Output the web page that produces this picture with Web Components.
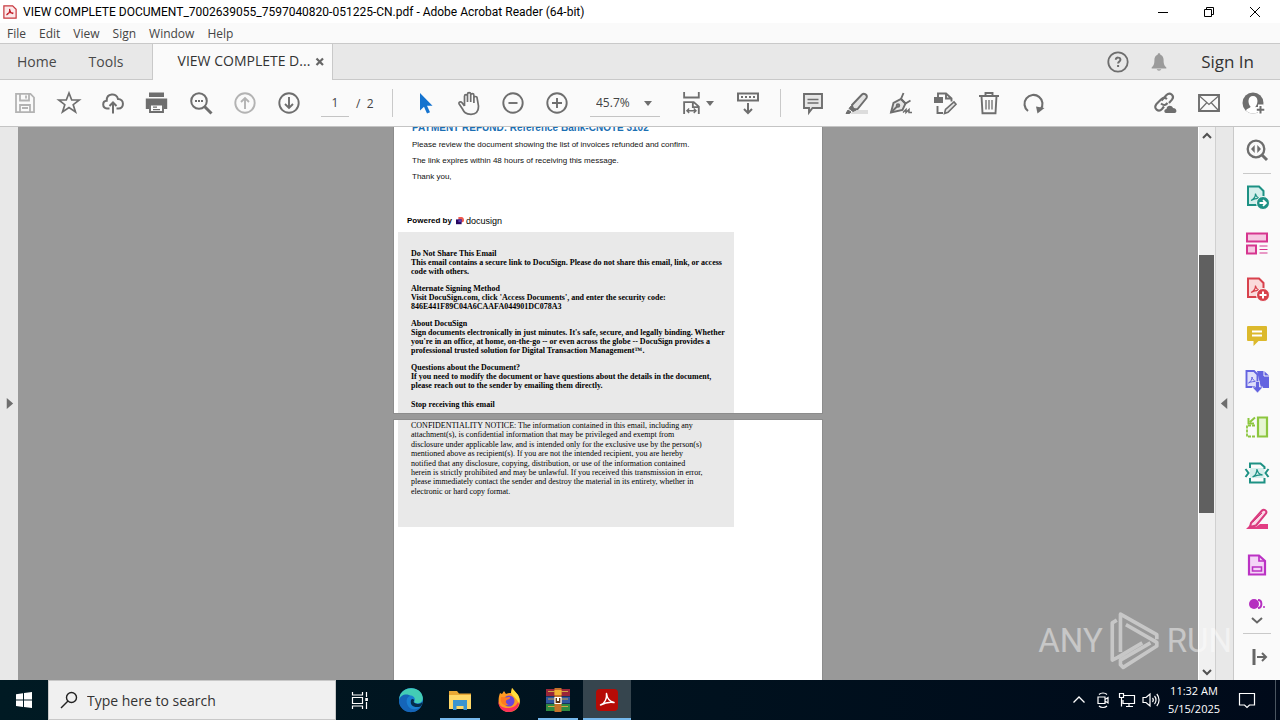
<!DOCTYPE html>
<html lang="en">
<head>
<meta charset="utf-8">
<title>VIEW COMPLETE DOCUMENT - Adobe Acrobat Reader</title>
<style>
  html, body { margin: 0; height: 100%; }
  body { font-family: "Open Sans", "Noto Sans", sans-serif; font-size: 12px; color: #222; overflow: hidden; }
</style>
</head>
<body>
<acro-desktop></acro-desktop>
<script>
const ICONS = {
  pdfapp: `<svg viewBox="0 0 16 16"><path d="M1 1h10l4 4v10H1z" fill="#fbe9ea" stroke="#c8383f" stroke-width="1.4"/><path d="M4 11.500c2-1 4-4 3.500-7M4 11.500c1-3 5-3.500 8-2M7.500 5c.5 3 2 4.500 4 5" fill="none" stroke="#c21f2a" stroke-width="1.300"/></svg>`,
  min: `<svg viewBox="0 0 12 12"><path d="M1 6.500h10" stroke="#000"/></svg>`,
  restore: `<svg viewBox="0 0 12 12"><path d="M1.500 3.500h7v7h-7zM3.500 3.500v-2h7v7h-2" fill="none" stroke="#000"/></svg>`,
  close: `<svg viewBox="0 0 12 12"><path d="M1 1l10 10M11 1L1 11" stroke="#000"/></svg>`,
  tabx: `<svg viewBox="0 0 10 10"><path d="M1.500 1.500l6.500 6.500M8 1.500L1.500 8" stroke="#666" stroke-width="2.200"/></svg>`,
  help: `<svg viewBox="0 0 24 24" fill="none" stroke="#6e6e6e" stroke-width="1.800"><circle cx="12" cy="12" r="9.700"/><path d="M9.800 9.800c0-3 4.600-2.800 4.600 0 0 1.600-2.300 1.800-2.300 3.700M12.100 15v2" stroke-width="2"/></svg>`,
  bell: `<svg viewBox="0 0 24 24" fill="#9b9b9b"><path d="M12 2.500c-1 0-1.500.7-1.500 1.500C8 4.700 7 7 7 9.500c0 5-1 6.500-3 8.500v1h16v-1c-2-2-3-3.500-3-8.500C17 7 16 4.700 13.500 4c0-.8-.5-1.500-1.500-1.500zM9.500 20h5c-.4 2-4.600 2-5 0z"/></svg>`,
  save: `<svg viewBox="0 0 24 24" fill="none" stroke="#b3b3b3" stroke-width="1.800"><path d="M3 2.800h14.500L21 6.500v14.700H3zM7 3v6.500h9V3M13 4.500v3M7 21v-7h10v7M9 17h6"/></svg>`,
  star: `<svg viewBox="0 0 24 24" fill="none" stroke="#6e6e6e" stroke-width="1.700"><path d="M12 2l2.700 7h7.500l-6 4.700 2.300 7.300-6.500-4.400L5.500 21l2.300-7.300-6-4.700h7.500z"/></svg>`,
  cloud: `<svg viewBox="0 0 24 24" fill="none" stroke="#6e6e6e" stroke-width="2"><path d="M8.500 17.500H6c-5-.3-5-7.500-.3-7.800C5.500 2 15.500 1.500 17 8c6.500 0 6.500 9.500.5 9.500h-2M12 22.500V12M8.500 15L12 11.500l3.500 3.500"/></svg>`,
  print: `<svg viewBox="0 0 24 24"><path d="M4 1.500h15V6H4z" fill="#6e6e6e"/><path d="M.8 7.500h21.400V18H19v-4H4v4H.8z" fill="#6e6e6e"/><path d="M5 13.500h13V21H5z" fill="#fff" stroke="#6e6e6e" stroke-width="1.900"/><path d="M8 16.200h4M8 18.600h7" stroke="#6e6e6e" stroke-width="1.200"/></svg>`,
  findtext: `<svg viewBox="0 0 24 24" fill="none" stroke="#6e6e6e"><circle cx="10" cy="10" r="7.800" stroke-width="2"/><path d="M15.500 15.500l7 7" stroke-width="3"/><path d="M6 10h2M9 10h2M12 10h2" stroke-width="2"/></svg>`,
  up: `<svg viewBox="0 0 24 24" fill="none" stroke="#b3b3b3" stroke-width="1.900"><circle cx="12" cy="12" r="9.700"/><path d="M12 18V7M8 11l4-4 4 4"/></svg>`,
  down: `<svg viewBox="0 0 24 24" fill="none" stroke="#6e6e6e" stroke-width="1.900"><circle cx="12" cy="12" r="9.700"/><path d="M12 6v11M8 13l4 4 4-4"/></svg>`,
  pointer: `<svg viewBox="0 0 24 24"><path d="M7 2v17.500l4-3.700 3 6.700 3-1.300-3-6.500h5.500z" fill="#1473cf"/></svg>`,
  hand: `<svg viewBox="0 0 24 24" fill="none" stroke="#6e6e6e" stroke-width="1.700"><path d="M7.500 15V5.200c0-2 3-2 3 0V11 3.200c0-2 3.200-2 3.200 0V11 4.200c0-2 3.200-2 3.200 0V12 7c0-2 3.200-2 3.200 0l1.400 8c0 5-2.500 8.300-7.500 8.300-5.500 0-7-2.300-8.500-5.300L2.200 13c-1-2 1.500-2.800 2.700-1.400L7.500 15"/></svg>`,
  minus: `<svg viewBox="0 0 24 24" fill="none" stroke="#6e6e6e" stroke-width="1.900"><circle cx="12" cy="12" r="9.700"/><path d="M7.500 12h9"/></svg>`,
  plus: `<svg viewBox="0 0 24 24" fill="none" stroke="#6e6e6e" stroke-width="1.900"><circle cx="12" cy="12" r="9.700"/><path d="M7 12h10M12 7v10"/></svg>`,
  caret: `<svg viewBox="0 0 8 8"><path d="M0 2h8L4 7z" fill="#6e6e6e"/></svg>`,
  fit: `<svg viewBox="0 0 24 24" fill="none" stroke="#6e6e6e" stroke-width="2"><path d="M4.500 0v6h16V0M4.500 24V11H15l5.500 5V24M14 11v5.500h6"/><path d="M7.500 20.500h10M10 18l-2.500 2.500L10 23M15 18l2.500 2.500L15 23" stroke-width="1.500"/></svg>`,
  keyb: `<svg viewBox="0 0 24 24" fill="none" stroke="#6e6e6e" stroke-width="2"><path d="M2 2.500h20v7H2z"/><path d="M5 6h14" stroke-dasharray="2 2"/><path d="M12 12v10M8 18l4 4 4-4"/></svg>`,
  comment: `<svg viewBox="0 0 24 24"><path d="M3 3h18v14H11.500L8 21.500V17H3z" fill="#e6e6e6" stroke="#6e6e6e" stroke-width="1.900"/><path d="M6.500 8.500h11M6.500 12h11" stroke="#6e6e6e" stroke-width="1.400"/></svg>`,
  marker: `<svg viewBox="0 0 24 24"><path d="M9 19h14v4H5z" fill="#dcdcdc"/><path d="M7 14L17 3.500c2-2 6 .5 4.500 3.500L12.500 18l-4.500.5z" fill="#e2e2e2" stroke="#6e6e6e" stroke-width="1.900"/><path d="M6 15l5 4-3 1.500L4 17.500zM3 19l3 2-1.500 1.500H1z" fill="#6e6e6e" stroke="#6e6e6e"/></svg>`,
  sign: `<svg viewBox="0 0 24 24" fill="none" stroke="#6e6e6e" stroke-width="1.900"><path d="M2 21.500L4.500 12 12 8l4.500 4.500L13.500 19z" fill="#e6e6e6"/><path d="M14.500 2L12 8l4.500 4.500 5-3M2 21.500l6.500-6.500"/><circle cx="9" cy="14.500" r="1.300"/><path d="M14 21.500l3-3v3l3-3v3h3" stroke-width="1.500"/></svg>`,
  editpdf: `<svg viewBox="0 0 24 24" fill="none" stroke="#6e6e6e" stroke-width="1.900"><path d="M5 6V2.500h8l5.500 5v3M13 2.500v5h5.500M4.500 15v7H10"/><path d="M1 6h9v6H1z" fill="#6e6e6e" stroke="none"/><path d="M11.500 22.500l1-4L21 11l2 2.300-8 8z" fill="#e6e6e6" stroke-width="1.600"/></svg>`,
  trash: `<svg viewBox="0 0 24 24" fill="none" stroke="#6e6e6e" stroke-width="1.900"><path d="M2 5h20M8.500 4.500V2h7v2.500M4.500 5l1 17.300h13L19.500 5"/><path d="M9 9v9.500M12 9v9.500M15 9v9.500" stroke-width="1.300"/></svg>`,
  rotate: `<svg viewBox="0 0 24 24" fill="none" stroke="#6e6e6e" stroke-width="2.100"><path d="M7 20A9 9 0 1 1 19.500 18.500"/><path d="M15 15.500l8.500 1.500-7 5.500z" fill="#6e6e6e" stroke="none"/></svg>`,
  link: `<svg viewBox="0 0 24 24"><g fill="none" stroke="#6e6e6e" stroke-width="2.100"><path d="M8.500 9.500l5-5.500c3.500-3.500 8.500.8 5.500 4.700l-3 3.300M8 12.500c3 2.500 5 1.500 6.500-.5"/><path d="M14 8c-2-1.500-4-1.500-6 .5L3.500 13c-3.500 4.500 2 8.700 5.500 5l2-2.500"/></g><path d="M13 22c-2.500-.5-2-4 .5-4 0-4 5.500-4.500 6.500-1 4 0 4.500 5 1.500 5z" fill="#6e6e6e"/></svg>`,
  mail: `<svg viewBox="0 0 24 24" fill="none" stroke="#6e6e6e"><path d="M2 4h20v16H2z" stroke-width="1.900"/><path d="M2.500 5l9.500 8.500L21.500 5M2.500 19.500L9.500 12M21.500 19.500L14.500 12" stroke-width="1.200"/></svg>`,
  person: `<svg viewBox="0 0 24 24"><circle cx="12" cy="12" r="10.500" fill="#6e6e6e"/><path d="M5 19.500c1-2.500 4.500-2 4.500-4C6.500 12.500 6.500 5 12 5s5.500 7.500 2.500 10.500c0 1 .5 1.500 2 2v4c-4 2-9 1-11.500-2z" fill="#fff"/><path d="M19.500 13.500v10M14.500 18.500h10" stroke="#fff" stroke-width="5"/><path d="M19.500 15v7.500M15.800 18.700h7.500" stroke="#6e6e6e" stroke-width="2"/></svg>`,
  tripR: `<svg viewBox="0 0 12 12"><path d="M3 0v12l7-6z" fill="#6e6e6e"/></svg>`,
  tripL: `<svg viewBox="0 0 12 12"><path d="M9 0v12L2 6z" fill="#6e6e6e"/></svg>`,
  chevU: `<svg viewBox="0 0 12 12"><path d="M2 8l4-4 4 4" fill="none" stroke="#505050" stroke-width="2"/></svg>`,
  chevD: `<svg viewBox="0 0 12 12"><path d="M2 4l4 4 4-4" fill="none" stroke="#505050" stroke-width="2"/></svg>`,
  more: `<svg viewBox="0 0 12 12"><path d="M1 4l5 4.500L11 4" fill="none" stroke="#666" stroke-width="2"/></svg>`,
  lens: `<svg viewBox="0 0 24 24" fill="none" stroke="#6e6e6e"><circle cx="11" cy="11" r="8.300" stroke-width="2.300"/><path d="M16.500 16.500l5.500 5.500" stroke-width="3"/><path d="M9.700 7v8L6 11zM12.300 7v8L16 11z" fill="#6e6e6e" stroke="none"/></svg>`,
  exportp: `<svg viewBox="0 0 24 24"><path d="M3 1.500h11L18.500 6v14H3z" fill="#d5efec" stroke="#1d9184" stroke-width="2"/><path d="M6 15.500c3-1.500 4.500-4 4.500-7 .5 3 2.500 4.500 5 5-3-.5-6 0-9.500 2z" fill="none" stroke="#1d9184" stroke-width="1.200"/><circle cx="18" cy="18" r="6.500" fill="#1d9184" stroke="#fafafa"/><path d="M14.500 18h6M18 15.200l2.900 2.800-2.900 2.800" fill="none" stroke="#fff" stroke-width="1.800"/></svg>`,
  organize: `<svg viewBox="0 0 24 24" fill="#f6c9e2" stroke="#d6368f" stroke-width="2"><path d="M2 2.500h20v8H2zM2 14.500h9v8H2z"/><path d="M14.500 15h8M14.500 18.500h8M14.500 22h8" stroke-width="1.200"/></svg>`,
  createp: `<svg viewBox="0 0 24 24"><path d="M3 1.500h11L18.500 6v14H3z" fill="#fadadb" stroke="#d8414c" stroke-width="2"/><path d="M6 15.500c3-1.500 4.500-4 4.500-7 .5 3 2.500 4.500 5 5-3-.5-6 0-9.500 2z" fill="none" stroke="#d8414c" stroke-width="1.200"/><circle cx="18" cy="18" r="6.500" fill="#d8414c" stroke="#fafafa"/><path d="M14.500 18h7M18 14.500v7" stroke="#fff" stroke-width="2"/></svg>`,
  note: `<svg viewBox="0 0 24 24"><path d="M3 3q-1 0-1 1v13q0 1 1 1h5.500v5l5-5H21q1 0 1-1V4q0-1-1-1z" fill="#dcb92c"/><path d="M7 8.500h10M7 12.500h10" stroke="#fff" stroke-width="2"/></svg>`,
  combine: `<svg viewBox="0 0 24 24"><path d="M12 2h7l5 4.500V19h-8z" fill="#6464e0"/><path d="M19 1.500V7h5" fill="none" stroke="#fafafa"/><path d="M1.500 2H9l3.500 3.500V18h-11z" fill="#e0e0fa" stroke="#6464e0" stroke-width="1.900"/><path d="M3.500 14c2-1 3.500-3.500 3.500-6 .5 2.500 2 4 4 4.500-2.500 0-5 .2-7.500 1.500z" fill="none" stroke="#6464e0"/><path d="M10.500 12.500h4V18h3.500L12.500 24 7 18h3.500z" fill="#6464e0" stroke="#fafafa" stroke-width=".6"/></svg>`,
  compress: `<svg viewBox="0 0 24 24"><path d="M13 2.500h9v19h-9z" fill="#e6f5d2" stroke="#8cc63f" stroke-width="2.200"/><path d="M10 10.500H2v11h9" fill="none" stroke="#8cc63f" stroke-width="1.800" stroke-dasharray="3 1"/><path d="M10 2.500L5 7M3.500 3v5.500H9" fill="none" stroke="#8cc63f" stroke-width="2"/></svg>`,
  shrink: `<svg viewBox="0 0 24 24" fill="none" stroke="#1d9184" stroke-width="2"><path d="M5 7h14.500v10H5z" fill="#d5efec" stroke="none"/><path d="M5 7V2.500h10.500L19.500 6v2M5 17v4.500h14.500V17"/><path d="M0.500 8l3 4-3 4M23.500 8l-3 4 3 4"/><path d="M7.500 16c3-1.500 4.500-5 4.500-8 .5 4 3 5.500 5.500 6-3.500-.5-6.500.5-10 2z" stroke-width="1.300"/></svg>`,
  redact: `<svg viewBox="0 0 24 24"><path d="M1 22h22v-5h-8l-4 3-5-3-5 5z" fill="#e23d83"/><path d="M6 16L17 3.500c2-2 5.500.5 4 3L11 18.500l-6 1.500z" fill="#fbd9e7" stroke="#d93a7e" stroke-width="2"/><path d="M8 15l9-9" stroke="#d93a7e"/></svg>`,
  form: `<svg viewBox="0 0 24 24" fill="#f4d5f7" stroke="#bb32c4" stroke-width="2.200"><path d="M4 2.500h10l6 5.500v13.500H4z"/><path d="M14 3v5h5.500" fill="none" stroke-width="1.700"/><path d="M7.500 14h9v4h-9z" stroke-width="1.600"/></svg>`,
  blob: `<svg viewBox="0 0 24 24"><circle cx="9" cy="11" r="5" fill="#b52fc0"/><path d="M13 7c4.500 0 4.500 8 0 8" fill="none" stroke="#b52fc0" stroke-width="2"/><circle cx="19" cy="14" r="1" fill="#b52fc0"/></svg>`,
  collapse: `<svg viewBox="0 0 24 24" fill="none" stroke="#666"><path d="M9 4v16" stroke-width="3"/><path d="M12 12h9M17 8l4 4-4 4" stroke-width="2"/></svg>`,
  docu: `<svg viewBox="0 0 10 10"><path d="M3 0h4c2 0 3 2 3 4 0 1.500-1 2.500-2 2.500H3z" fill="#ee5a4f"/><path d="M0 3h7v6H0z" fill="#26065d"/><path d="M3 3h4v3.500H3z" fill="#5b3bb0"/></svg>`,
  play: `<svg viewBox="0 0 56 66" fill="none" stroke="#fff" stroke-width="4" stroke-linejoin="round"><path d="M12 45V3.500L52 26v5M18 15l34 19.500v4L15 62l-3-3v-5L45 35M8 10l-5 3v41l6-3L36 35"/></svg>`,
  win: `<svg viewBox="0 0 16 16" fill="#fff"><path d="M0 2.200L7 1.200v6.400H0zM8 1l8-1v7.600H8zM0 8.500h7v6.400l-7-1zM8 8.500h8V16l-8-1z"/></svg>`,
  search: `<svg viewBox="0 0 18 18" fill="none" stroke="#222" stroke-width="1.400"><circle cx="11.500" cy="6.500" r="5"/><path d="M8 10l-7 7"/></svg>`,
  taskview: `<svg viewBox="0 0 18 18" fill="none" stroke="#fff" stroke-width="1.200"><path d="M1.500 1v3h10V1M1.500 6.500h10v6h-10zM1.500 18v-3h10v3M15.500 1v5M15.500 11v7"/><path d="M14.300 7h2.600v3h-2.600z" fill="#fff" stroke="none"/></svg>`,
  edge: `<svg viewBox="0 0 24 24"><circle cx="12" cy="12" r="12" fill="#1a7fd0"/><path d="M.5 9C3-2 21-3 23.700 9c1 6-5 7.500-8.700 5.500 3-5-2-8-6-7C4.500 8 1.500 9.500.3 12z" fill="#43cdb5"/><path d="M0 12C1 7 8 5 11 8c-5 1-4.500 11 2 13 4 1 7-.5 9-2.500C18 26 6 26 2 19-.2 16 0 13 0 12z" fill="#1565b8"/><path d="M15 14.500c2 2 6 2 8.500-.5-.2 2-1 3.500-2 4.500-6 2-11-1-9.500-6.500 1-2 3.500-1 3 .5-.5 1-.5 1.500 0 2z" fill="#052c4c"/></svg>`,
  folder: `<svg viewBox="0 0 24 24"><path d="M1 3h8l2 2.500h12V20H1z" fill="#e9a835"/><path d="M1 7h22v14H1z" fill="#ffd868"/><path d="M5 12h14v10h-3.500v-4h-7v4H5z" fill="#3c94cf"/></svg>`,
  firefox: `<svg viewBox="0 0 24 24"><path d="M3 5l2 1 2-3 2 3c2-1 4-1 5-1l1-5 6 7c5 9-1 17-9 17S-1 16 3 5z" fill="#ff9a23"/><path d="M1 12c1 6 4 8 10 8 5 0 9-2 11-8 1 7-4 12-10.500 12S1 19 1 12z" fill="#fb2f5b"/><path d="M15 0l6 7c2 3 2 7 1 9-1-5-6-7-8-11z" fill="#ffdf3d"/><circle cx="12" cy="13" r="5.500" fill="#6a46d8"/><path d="M4 9c3 0 5 1 8 0 2 0 1 2-1 2.500C8 12 8 16 12 17c-7 1-9-3-8-8z" fill="#ff7a20"/></svg>`,
  winrar: `<svg viewBox="0 0 24 24"><path d="M0 1h24v7H0z" fill="#9a2638"/><path d="M0 8.500h24v7H0z" fill="#3157a0"/><path d="M0 16h24v7H0z" fill="#2f8a42"/><path d="M2 3.500h20M2 11h20M2 18.500h20" stroke="#d0a548"/><path d="M8.500 0h7v24h-7z" fill="#c5722a"/><path d="M8.500 2h7v5h-7z" fill="#f2b233"/><path d="M9 9.500h6v6H9z" fill="#5b3010" stroke="#fff" stroke-width="1.200"/><path d="M12 9v4" stroke="#fff" stroke-width="2"/></svg>`,
  acrobat: `<svg viewBox="0 0 22 22"><rect width="22" height="22" rx="4" fill="#b60b06"/><path d="M4.500 16c4-1.500 6.500-6 6-11.500C11 9 14 12.500 18 13.500c-4.500-.8-9 .2-13.500 2.500z" fill="none" stroke="#fff" stroke-width="1.500" stroke-linejoin="round"/></svg>`,
  trayUp: `<svg viewBox="0 0 16 16"><path d="M2.500 10.500L8 5l5.500 5.500" fill="none" stroke="#fff" stroke-width="1.300"/></svg>`,
  cam: `<svg viewBox="0 0 16 16" fill="none" stroke="#fff" stroke-width="1.200"><path d="M3 5h7v6.500H3zM10 7.500l3-2v5.500l-3-2M4 2.500c2-2 6-2 8 0M4 14c2 2 6 2 8 0"/></svg>`,
  net: `<svg viewBox="0 0 18 18" fill="none" stroke="#fff" stroke-width="1.200"><path d="M6 4.500h10.500v8H5V9M8 15.500h7M11 12.500v3M1.500 2.500h4v4h-4zM3.500 6.500v9"/></svg>`,
  vol: `<svg viewBox="0 0 18 18" fill="none" stroke="#fff" stroke-width="1.200"><path d="M1 6.500h3L8 3v12l-4-3.500H1zM10.500 7c1 1.200 1 2.800 0 4M12.500 5c2 2.200 2 5.800 0 8M14.800 3c3 3.500 3 8.500 0 12"/></svg>`,
  notif: `<svg viewBox="0 0 18 18"><path d="M1.500 2.500h15v11.500h-5L9 16.500 6.500 14h-5z" fill="none" stroke="#fff" stroke-width="1.200"/></svg>`
};

const BASE = `
  *, *::before, *::after { box-sizing: border-box; }
  button, input, select { font: inherit; color: inherit; background: none; border: 0; padding: 0; margin: 0; border-radius: 0; appearance: none; outline: 0; }
  button { display: inline-flex; align-items: center; justify-content: center; }
`;

function define(name, css, html) {
  const template = document.createElement('template');
  template.innerHTML = `<style>${BASE}${css}</style>${html}`;
  customElements.define(name, class extends HTMLElement {
    constructor() {
      super();
      this.attachShadow({ mode: 'open' }).append(template.content.cloneNode(true));
    }
  });
}

customElements.define('ui-icon', class extends HTMLElement {
  connectedCallback() {
    if (this.shadowRoot) return;
    const size = this.getAttribute('size') || 24;
    const h = this.getAttribute('h') || size;
    this.attachShadow({ mode: 'open' }).innerHTML =
      `<style>:host{display:inline-flex;flex:none;width:${size}px;height:${h}px}svg{width:100%;height:100%;display:block;overflow:visible}</style>${ICONS[this.getAttribute('name')]}`;
  }
});

const btn = (label, icon, size = 24) =>
  `<button type="button" aria-label="${label}"><ui-icon name="${icon}" size="${size}"></ui-icon></button>`;

define('acro-title-bar', `
  :host { display: flex; align-items: center; height: 23px; flex: none; background: #fff; color: #000; padding: 0 2px 0 3px; }
  span { flex: 1; padding-left: 6px; white-space: nowrap; overflow: hidden; line-height: 20px; font-family: Roboto, "Open Sans", sans-serif; font-size: 12px; }
  button { width: 46px; height: 22px; }
`, `<ui-icon name="pdfapp" size="14"></ui-icon>
  <span>VIEW COMPLETE DOCUMENT_7002639055_7597040820-051225-CN.pdf - Adobe Acrobat Reader (64-bit)</span>
  ${btn('Minimize', 'min', 12)}${btn('Restore', 'restore', 12)}${btn('Close', 'close', 12)}`);

define('acro-menu-bar', `
  :host { display: flex; gap: 13px; align-items: center; height: 20px; flex: none; background: #fafafa; padding-left: 7px; font-size: 12px; color: #444; }
  button { height: 20px; }
`, ['File', 'Edit', 'View', 'Sign', 'Window', 'Help'].map(t => `<button type="button">${t}</button>`).join(''));

define('acro-tab-bar', `
  :host { display: flex; align-items: stretch; height: 37px; flex: none; background: #e8e8e8; border: solid #c9c9c9; border-width: 1px 0; font-size: 14px; color: #484848; }
  .home { padding-left: 17px; }
  .tools { padding-left: 32px; width: 95px; justify-content: flex-start; }
  .tab { display: flex; align-items: center; width: 181px; margin-bottom: -1px; background: #fafafa; border: solid #c9c9c9; border-width: 0 1px; padding: 0 7px 0 25px; }
  .tab button { flex: none; }
  .tab .name { flex: 1; justify-content: flex-start; color: #333; white-space: nowrap; line-height: 18px; padding-bottom: 2px; }
  .gap { flex: 1; }
  .right { display: flex; align-items: center; gap: 18px; padding-right: 26px; }
  .sign { padding-left: 13px; font-size: 17px; color: #333; padding-bottom: 1px; }
`, `<button type="button" class="home">Home</button><button type="button" class="tools">Tools</button>
  <div class="tab"><button type="button" class="name">VIEW COMPLETE D...</button>${btn('Close tab', 'tabx', 10)}</div>
  <div class="gap"></div>
  <div class="right">${btn('Help', 'help', 24)}${btn('Notifications', 'bell', 22)}<button type="button" class="sign">Sign In</button></div>`);

define('acro-toolbar', `
  :host { display: flex; align-items: center; height: 47px; flex: none; background: #fafafa; border-bottom: 1px solid #c4c4c4; padding: 0 5px 0 3px; color: #444; font-size: 12px; }
  button { width: 44px; height: 40px; flex: none; }
  .page { display: flex; align-items: center; width: 71px; padding-left: 10px; gap: 7px; }
  .page input { width: 28px; height: 28px; text-align: center; border-bottom: 1px solid #c4c4c4; }
  .sep { width: 1px; height: 28px; background: #c9c9c9; margin: 0 10px; flex: none; }
  .zoom { position: relative; width: 70px; margin: 0 20px 0 11px; height: 28px; border-bottom: 1px solid #c4c4c4; display: flex; align-items: center; }
  .zoom select { width: 100%; height: 100%; padding-left: 6px; }
  .zoom ui-icon { position: absolute; right: 8px; top: 10px; pointer-events: none; }
  .fit { width: 34px; justify-content: space-between; margin-right: 12px; }
  .gap { flex: 1; }
`, `${btn('Save', 'save')}${btn('Star', 'star')}${btn('Share to cloud', 'cloud')}${btn('Print', 'print')}${btn('Find text', 'findtext')}${btn('Previous page', 'up')}${btn('Next page', 'down')}
  <div class="page"><input aria-label="Page number" value="1"><span>/&nbsp; 2</span></div>
  <div class="sep"></div>
  ${btn('Select', 'pointer')}${btn('Pan', 'hand')}${btn('Zoom out', 'minus')}${btn('Zoom in', 'plus')}
  <div class="zoom"><select aria-label="Zoom level"><option>45.7%</option></select><ui-icon name="caret" size="8"></ui-icon></div>
  <button type="button" class="fit" aria-label="Fit width"><ui-icon name="fit" size="22"></ui-icon><ui-icon name="caret" size="8"></ui-icon></button>
  ${btn('Read mode', 'keyb')}
  <div class="sep"></div>
  ${btn('Comment', 'comment')}${btn('Highlight', 'marker')}${btn('Fill and sign', 'sign')}${btn('Edit PDF', 'editpdf')}${btn('Delete', 'trash')}${btn('Rotate', 'rotate')}
  <div class="gap"></div>
  ${btn('Share link', 'link')}${btn('Send by email', 'mail')}${btn('Share with people', 'person')}`);

define('side-strip', `
  :host { display: flex; flex: none; width: 18px; background: #e8e8e8; }
  ::slotted(button) { flex: 1; }
`, `<slot></slot>`);

define('pdf-page', `
  :host { display: block; flex: none; width: 428px; background: #fff; box-shadow: 0 0 0 1px #8c8c8c; padding-left: 4px; }
`, `<slot></slot>`);

define('email-notice', `
  :host { display: flex; flex-direction: column; gap: 8px; width: 336px; background: #e9e9e9; padding-left: 13px; font-family: "Liberation Serif", "Times New Roman", serif; font-size: 8px; line-height: 9px; color: #000; white-space: nowrap; }
`, `<slot></slot>`);

define('acro-viewer', `
  :host { flex: 1; min-width: 0; overflow: hidden; background: #999; display: flex; flex-direction: column; align-items: center; gap: 7px; }
  .first { margin-top: -6px; font-family: "Liberation Sans", Arial, sans-serif; font-size: 8px; color: #111; }
  .last { flex: 1; }
  h1 { margin: 0 0 2px 14px; font-size: 10px; line-height: 14px; color: #1b6fb3; }
  .body p { margin: 0 0 0 14px; line-height: 16px; }
  .by { display: flex; align-items: center; height: 16px; margin: 28px 0 3px 9px; gap: 4px; font-weight: bold; color: #000; line-height: 12px; }
  .by b { font-size: 9px; margin-left: -2px; font-weight: normal; }
  email-notice p { margin: 0; }
  .page1 { padding-top: 17px; font-weight: bold; padding-bottom: 4px; }
  .page1 .stop { margin-top: 2px; }
  .page2 { padding-top: 1px; height: 107px; }
  .page2 p { display: grid; grid-auto-rows: 1fr; height: 75px; }
`, `<pdf-page class="first">
    <h1>PAYMENT REFUND: Reference Bank-CNOTE 3102</h1>
    <div class="body"><p>Please review the document showing the list of invoices refunded and confirm.</p>
    <p>The link expires within 48 hours of receiving this message.</p>
    <p>Thank you,</p></div>
    <div class="by"><span>Powered by</span><ui-icon name="docu" size="8"></ui-icon><b>docusign</b></div>
    <email-notice class="page1">
      <p>Do Not Share This Email<br>This email contains a secure link to DocuSign. Please do not share this email, link, or access<br>code with others.</p>
      <p>Alternate Signing Method<br>Visit DocuSign.com, click 'Access Documents', and enter the security code:<br>846E441F89C04A6CAAFA044901DC078A3</p>
      <p>About DocuSign<br>Sign documents electronically in just minutes. It's safe, secure, and legally binding. Whether<br>you're in an office, at home, on-the-go -- or even across the globe -- DocuSign provides a<br>professional trusted solution for Digital Transaction Management™.</p>
      <p>Questions about the Document?<br>If you need to modify the document or have questions about the details in the document,<br>please reach out to the sender by emailing them directly.</p>
      <p class="stop">Stop receiving this email</p>
    </email-notice>
  </pdf-page>
  <pdf-page class="last">
    <email-notice class="page2"><p><span>CONFIDENTIALITY NOTICE: The information contained in this email, including any</span>
      <span>attachment(s), is confidential information that may be privileged and exempt from</span>
      <span>disclosure under applicable law, and is intended only for the exclusive use by the person(s)</span>
      <span>mentioned above as recipient(s). If you are not the intended recipient, you are hereby</span>
      <span>notified that any disclosure, copying, distribution, or use of the information contained</span>
      <span>herein is strictly prohibited and may be unlawful. If you received this transmission in error,</span>
      <span>please immediately contact the sender and destroy the material in its entirety, whether in</span>
      <span>electronic or hard copy format.</span></p></email-notice>
  </pdf-page>`);

define('scroll-bar', `
  :host { display: flex; flex-direction: column; flex: none; width: 18px; background: #f0f0f0; border-left: 1px solid #fff; border-right: 1px solid #d0d0d0; }
  button { height: 17px; flex: none; }
  .track { flex: 1; display: flex; flex-direction: column; }
  .before { flex: 111; } .thumb { flex: 258; background: #606060; margin-right: 1px; } .after { flex: 150; }
`, `${btn('Scroll up', 'chevU', 12)}<div class="track"><div class="before"></div><div class="thumb"></div><div class="after"></div></div>${btn('Scroll down', 'chevD', 12)}`);

define('tools-pane', `
  :host { display: flex; flex-direction: column; flex: none; width: 47px; background: #fafafa; border-left: 1px solid #c9c9c9; }
  button { height: 46px; flex: none; width: 46px; }
  .list { flex: 1; min-height: 0; overflow: hidden; display: flex; flex-direction: column; }
  .list button:last-child { height: 34px; }
  hr { width: 28px; margin: 0 9px; border: 0; height: 1px; background: #c9c9c9; flex: none; }
  .more { height: 24px; padding-bottom: 3px; }
`, `${btn('Search tools', 'lens')}<hr>
  <div class="list">${btn('Export PDF', 'exportp')}${btn('Organize pages', 'organize')}${btn('Create PDF', 'createp')}${btn('Comment', 'note')}${btn('Combine files', 'combine')}${btn('Rotate pages', 'compress')}${btn('Compress PDF', 'shrink')}${btn('Redact', 'redact')}${btn('Prepare form', 'form')}${btn('Compare', 'blob')}</div>
  <button type="button" class="more" aria-label="More tools"><ui-icon name="more" size="12"></ui-icon></button><hr>
  ${btn('Collapse pane', 'collapse')}`);

define('any-run-mark', `
  :host { display: flex; align-items: center; gap: 6px; color: #fff; opacity: .45; font-family: "Liberation Sans Narrow", Roboto, sans-serif; font-size: 33px; line-height: 60px; pointer-events: none; }
`, `<span>ANY</span><ui-icon name="play" size="52" h="60"></ui-icon><span>RUN</span>`);

define('win-taskbar', `
  :host { display: flex; align-items: stretch; height: 40px; flex: none; background: linear-gradient(90deg, #001a23, #000a1a); color: #fff; font-size: 12px; }
  .start { width: 48px; }
  label { display: flex; align-items: center; width: 288px; background: #f0f0f0; border: 1px solid #c8c8c8; padding-left: 11px; gap: 9px; color: #333; }
  input { flex: 1; min-width: 0; font-size: 14px; }
  input::placeholder { color: #333; opacity: 1; }
  .apps { display: flex; gap: 1px; }
  .apps button { width: 48px; position: relative; }
  .apps button:first-child { margin-right: 2px; }
  .open::after { content: ""; position: absolute; left: 4px; right: 4px; bottom: 0; height: 2px; background: #76b9ed; }
  .apps .active { background: #36454e; }
  .active::after { left: 0; right: 0; }
  .gap { flex: 1; }
  .tray { display: flex; align-items: stretch; }
  .tray > button { width: 24px; }
  .tray .clock { width: 56px; flex-direction: column; line-height: 18px; font-size: 11px; white-space: nowrap; margin-left: 3px; }
  .tray .note { width: 50px; margin-right: 3px; }
  .edge { width: 5px; border-left: 1px solid #4a5560; }
`, `<button type="button" class="start" aria-label="Start"><ui-icon name="win" size="16"></ui-icon></button>
  <label><ui-icon name="search" size="18"></ui-icon><input type="text" aria-label="Search" placeholder="Type here to search"></label>
  <div class="apps">${btn('Task view', 'taskview', 18)}
    <button type="button" aria-label="Edge"><ui-icon name="edge"></ui-icon></button>
    <button type="button" class="open" aria-label="File Explorer"><ui-icon name="folder"></ui-icon></button>
    <button type="button" aria-label="Firefox"><ui-icon name="firefox"></ui-icon></button>
    <button type="button" class="open" aria-label="WinRAR"><ui-icon name="winrar"></ui-icon></button>
    <button type="button" class="open active" aria-label="Acrobat Reader"><ui-icon name="acrobat" size="22"></ui-icon></button>
  </div>
  <div class="gap"></div>
  <div class="tray">${btn('Hidden icons', 'trayUp', 16)}${btn('Camera', 'cam', 16)}${btn('Network', 'net', 18)}${btn('Volume', 'vol', 18)}
    <button type="button" class="clock"><span>11:32 AM</span><span>5/15/2025</span></button>
    <button type="button" class="note" aria-label="Notifications"><ui-icon name="notif" size="18"></ui-icon></button><div class="edge"></div></div>`);

define('acro-desktop', `
  :host { display: flex; flex-direction: column; height: 100vh; }
  main { flex: 1; min-height: 0; display: flex; position: relative; }
  .right { width: 17px; }
  any-run-mark { position: absolute; right: 48px; bottom: 9px; }
`, `<acro-title-bar></acro-title-bar><acro-menu-bar></acro-menu-bar><acro-tab-bar></acro-tab-bar><acro-toolbar></acro-toolbar>
  <main>
    <side-strip>${btn('Show navigation pane', 'tripR', 11)}</side-strip>
    <acro-viewer></acro-viewer>
    <scroll-bar></scroll-bar>
    <side-strip class="right">${btn('Show tools pane', 'tripL', 11)}</side-strip>
    <tools-pane></tools-pane>
    <any-run-mark></any-run-mark>
  </main>
  <win-taskbar></win-taskbar>`);
</script>
</body>
</html>
